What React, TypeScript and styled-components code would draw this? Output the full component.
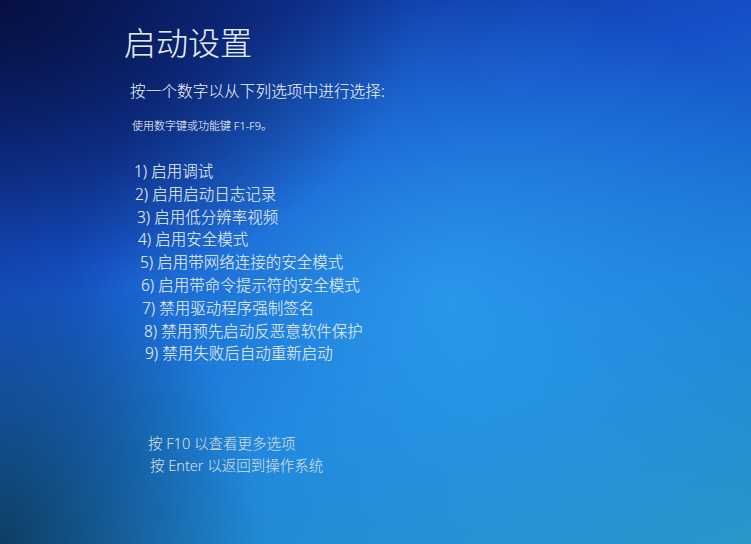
import styled, { createGlobalStyle } from 'styled-components'

const GlobalStyle = createGlobalStyle`
  html, body {
    margin: 0;
    padding: 0;
    background: #0a1650;
  }
  #root {
    width: 751px;
    height: 544px;
  }
`

const Screen = styled.div`
  box-sizing: border-box;
  width: 751px;
  height: 544px;
  overflow: hidden;
  padding: 26px 0 0 124px;
  display: flex;
  flex-direction: column;
  font-family: 'Noto Sans', 'Noto Sans CJK SC', sans-serif;
  color: #e2ebf1;
  text-shadow: 0 0 0.6px rgba(220, 235, 245, 0.4);
  background:
    radial-gradient(ellipse 260px 300px at 0% 100%, rgba(10, 45, 70, 0.8), rgba(10, 45, 70, 0) 100%),
    radial-gradient(ellipse 420px 300px at 0% 0%, rgba(6, 14, 60, 0.95), rgba(6, 14, 60, 0) 100%),
    radial-gradient(ellipse 380px 320px at 60% 55%, rgba(45, 160, 240, 0.8), rgba(45, 160, 240, 0) 100%),
    linear-gradient(160deg, #0c2a8a 0%, #1550c8 35%, #1c7fd8 65%, #2898c8 100%);
`

const Title = styled.h1`
  margin: 0;
  font-size: 32px;
  line-height: 33px;
  font-weight: 300;
  letter-spacing: 0;
`

const Prompt = styled.div`
  margin-top: 24px;
  padding-left: 6px;
  font-size: 15.7px;
  line-height: 17px;
  font-weight: 300;
`

const Hint = styled.div`
  margin-top: 20px;
  padding-left: 8px;
  font-size: 11px;
  line-height: 12px;
  font-weight: 300;
`

const OptionList = styled.ol`
  margin: 28px 0 0 0;
  padding: 0;
  list-style: none;
  display: flex;
  flex-direction: column;
`

const Option = styled.li<{ $shift: number }>`
  padding-left: ${(p) => 10 + p.$shift}px;
  font-size: 15.5px;
  line-height: 22.8px;
  font-weight: 300;
  white-space: nowrap;
`

const Footer = styled.div`
  margin-top: 67px;
  display: flex;
  flex-direction: column;
  color: #cbd7de;
  font-size: 14.5px;
  line-height: 22px;
  font-weight: 300;
`

const FooterLine = styled.div<{ $shift: number }>`
  padding-left: ${(p) => 24 + p.$shift}px;
`

const options = [
  '启用调试',
  '启用启动日志记录',
  '启用低分辨率视频',
  '启用安全模式',
  '启用带网络连接的安全模式',
  '启用带命令提示符的安全模式',
  '禁用驱动程序强制签名',
  '禁用预先启动反恶意软件保护',
  '禁用失败后自动重新启动',
]

export default function App() {
  return (
    <>
      <GlobalStyle />
      <Screen>
        <Title>启动设置</Title>
        <Prompt>按一个数字以从下列选项中进行选择:</Prompt>
        <Hint>使用数字键或功能键 F1-F9。</Hint>
        <OptionList>
          {options.map((text, i) => (
            <Option key={text} $shift={Math.round(i * 1.4)}>
              {i + 1}) {text}
            </Option>
          ))}
        </OptionList>
        <Footer>
          <FooterLine $shift={0}>按 F10 以查看更多选项</FooterLine>
          <FooterLine $shift={2}>按 Enter 以返回到操作系统</FooterLine>
        </Footer>
      </Screen>
    </>
  )
}
